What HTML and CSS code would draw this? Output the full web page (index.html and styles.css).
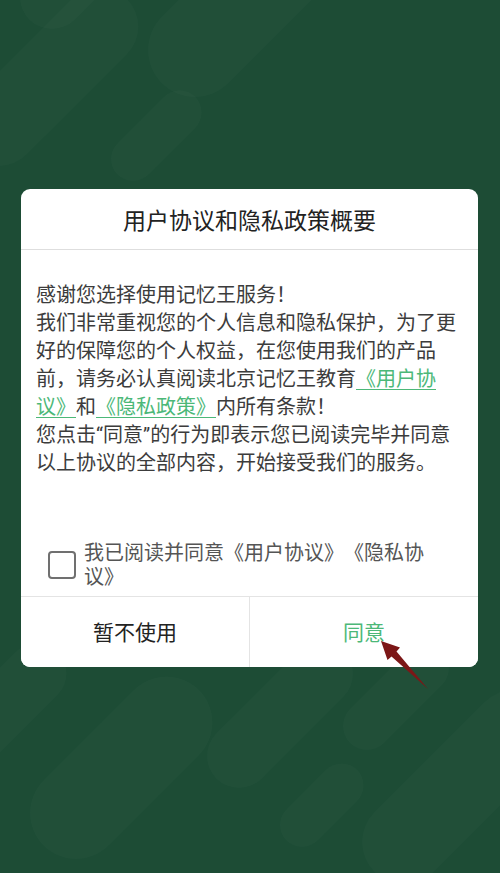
FILE: index.html
```html
<!DOCTYPE html>
<html lang="zh-CN">
<head>
<meta charset="utf-8">
<title>用户协议和隐私政策概要</title>
<link rel="stylesheet" href="styles.css">
</head>
<body>
<div class="screen">
  <div class="bg">
    <span class="pill p1"></span>
    <span class="pill p2"></span>
    <span class="pill p3"></span>
    <span class="pill p4"></span>
    <span class="pill p5"></span>
    <span class="pill p6"></span>
    <span class="pill p7"></span>
    <span class="pill p8"></span>
    <span class="pill p9"></span>
    <span class="pill p10"></span>
  </div>
  <div class="dialog">
    <div class="dialog-header">用户协议和隐私政策概要</div>
    <div class="dialog-body">
      <div class="text">
        <p>感谢您选择使用记忆王服务！</p>
        <p>我们非常重视您的个人信息和隐私保护，为了更好的保障您的个人权益，在您使用我们的产品前，请务必认真阅读北京记忆王教育<a class="link">《用户协议》</a>和<a class="link">《隐私政策》</a>内所有条款！</p>
        <p>您点击“同意”的行为即表示您已阅读完毕并同意以上协议的全部内容，开始接受我们的服务。</p>
      </div>
      <label class="agree">
        <span class="checkbox"></span>
        <span class="agree-text">我已阅读并同意《用户协议》《隐私协议》</span>
      </label>
    </div>
    <div class="dialog-actions">
      <button class="btn btn-cancel">暂不使用</button>
      <button class="btn btn-ok">同意</button>
    </div>
  </div>
  <svg class="arrow" width="60" height="60" viewBox="375 635 60 60">
    <polygon points="381,641 400,647.5 396.5,651.5 428,689 391.5,656.5 387.5,660" fill="#7c1717"/>
  </svg>
</div>
</body>
</html>
```

FILE: styles.css
```css
* { box-sizing: border-box; }
html, body { margin: 0; padding: 0; }
body {
  width: 500px;
  height: 873px;
  overflow: hidden;
  font-family: "Roboto", "Noto Sans CJK SC", sans-serif;
  background: #1d4c35;
  text-spacing-trim: space-all;
}
.screen {
  position: relative;
  width: 500px;
  height: 873px;
  padding-top: 189px;
  overflow: hidden;
  background: #1d4c35;
}
.bg {
  position: absolute;
  inset: 0;
  overflow: hidden;
}
.pill {
  position: absolute;
  display: block;
  border-radius: 999px;
  background: rgba(255, 255, 255, 0.021);
  transform: rotate(-45deg);
}
.p1 { left: 20px; top: -35px; width: 200px; height: 64px; transform-origin: 32px 32px; }
.p2 { left: 148px; top: 3px; width: 260px; height: 94px; transform-origin: 47px 47px; }
.p3 { left: -40px; top: 88px; width: 220px; height: 78px; transform-origin: 39px 39px; }
.p4 { left: 111px; top: 137px; width: 110px; height: 44px; transform-origin: 22px 22px; }
.p5 { left: 30px; top: 767px; width: 220px; height: 92px; transform-origin: 46px 46px; }
.p6 { left: 207px; top: 724px; width: 180px; height: 64px; transform-origin: 32px 32px; }
.p7 { left: 343px; top: 702px; width: 130px; height: 48px; transform-origin: 24px 24px; }
.p8 { left: 280px; top: 803px; width: 100px; height: 44px; transform-origin: 22px 22px; }
.p9 { left: 362px; top: 800px; width: 240px; height: 84px; transform-origin: 42px 42px; }
.p10 { left: -50px; top: 700px; width: 140px; height: 60px; transform-origin: 30px 30px; }

.dialog {
  position: relative;
  margin: 0 22px 0 21px;
  width: 457px;
  background: #fff;
  border-radius: 9px;
  overflow: hidden;
}
.dialog-header {
  height: 61px;
  display: flex;
  align-items: center;
  justify-content: center;
  font-size: 23px;
  color: #222;
  border-bottom: 1px solid #dedede;
}
.dialog-body {
  padding: 31px 16px 7px 15px;
}
.text {
  font-size: 20px;
  line-height: 28px;
  color: #3c3c3c;
}
.text p { margin: 0; }
.link {
  color: #4cb878;
  text-decoration: underline;
  text-underline-offset: 3px;
  text-decoration-thickness: 1px;
}
.agree {
  margin-top: 64px;
  padding: 0 12px 0 12px;
  display: flex;
  align-items: center;
  gap: 8px;
}
.checkbox {
  flex: none;
  width: 28px;
  height: 28px;
  border: 2px solid #707070;
  border-radius: 4px;
}
.agree-text {
  font-size: 20px;
  line-height: 24px;
  color: #555;
}
.dialog-actions {
  display: flex;
  height: 71px;
  border-top: 1px solid #e4e4e4;
}
.btn {
  flex: 1;
  border: 0;
  background: #fff;
  font-family: "Roboto", "Noto Sans CJK SC", sans-serif;
  font-size: 21px;
  padding: 0 0 2px;
}
.btn-cancel {
  color: #222;
  border-right: 1px solid #e4e4e4;
}
.btn-ok {
  color: #4cb878;
}
.arrow {
  position: absolute;
  left: 375px;
  top: 635px;
}
```
